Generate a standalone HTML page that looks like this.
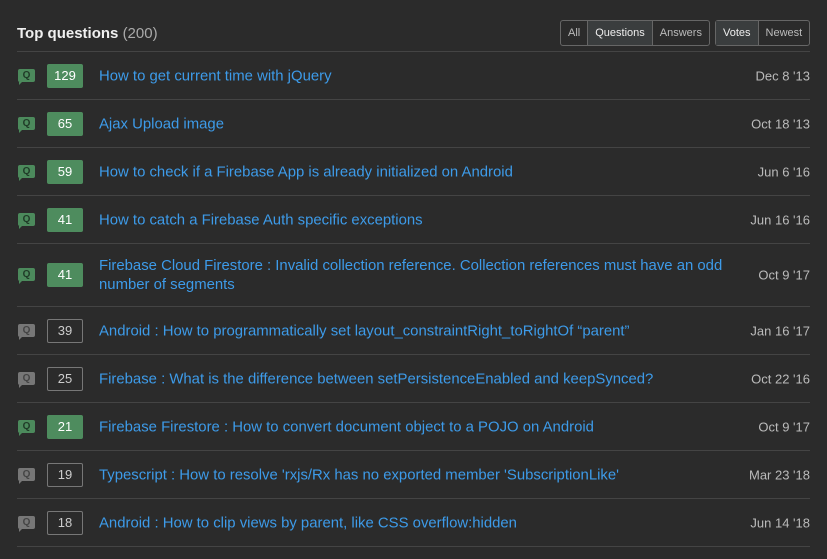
<!DOCTYPE html>
<html><head><style>
body{margin:0;background:#2b2b2b;font-family:"Liberation Sans",Arial,sans-serif;width:827px;height:559px;overflow:hidden;position:relative}
.h{position:absolute;left:17px;top:25px;font-size:15px;color:#f0f0f0;font-weight:bold}
.h span{font-weight:normal;color:#aaa}
.g{position:absolute;top:20px;height:24px;border:1px solid #666;border-radius:3px;display:flex;font-size:11px;color:#bbb}
.g div{padding:0 7px;line-height:24px;border-left:1px solid #666}
.g div:first-child{border-left:none}
.g .s{background:#3a3d3e;color:#eee}
.list{position:absolute;left:17px;top:51px;width:793px}
.r{border-top:1px solid #444;height:47px;position:relative}
.r.t{height:62px}
.ic{position:absolute;left:1px;top:50%;margin-top:-7px;width:17px;height:13px;border-radius:2px;background:#4c8a5c;font-size:10px;font-weight:bold;color:#1f3a27;text-align:center;line-height:13px}
.ic:after{content:"";position:absolute;left:1px;bottom:-3px;border-left:3px solid #4c8a5c;border-bottom:3px solid transparent}
.ic.gr{background:#777;color:#444}
.ic.gr:after{border-left-color:#777}
.b{position:absolute;left:30px;top:50%;margin-top:-12px;width:36px;height:24px;line-height:24px;text-align:center;font-size:13px;color:#fff;background:#4e8c5e;border-radius:2px;box-sizing:border-box}
.b.o{background:none;border:1px solid #777;color:#ccc;line-height:22px}
.q{position:absolute;left:82px;top:50%;transform:translateY(-50%);margin-top:1px;font-size:14.9px;color:#3d9be9;width:640px;line-height:19px}
.d{position:absolute;right:0;top:50%;transform:translateY(-50%);font-size:13px;color:#bbb}
</style></head><body>
<div class="h">Top questions <span>(200)</span></div>
<div class="g" style="left:560px"><div>All</div><div class="s">Questions</div><div>Answers</div></div>
<div class="g" style="left:715px"><div class="s">Votes</div><div>Newest</div></div>
<div class="list">
<div class="r"><div class="ic">Q</div><div class="b">129</div><div class="q">How to get current time with jQuery</div><div class="d">Dec 8 '13</div></div>
<div class="r"><div class="ic">Q</div><div class="b">65</div><div class="q">Ajax Upload image</div><div class="d">Oct 18 '13</div></div>
<div class="r"><div class="ic">Q</div><div class="b">59</div><div class="q">How to check if a Firebase App is already initialized on Android</div><div class="d">Jun 6 '16</div></div>
<div class="r"><div class="ic">Q</div><div class="b">41</div><div class="q">How to catch a Firebase Auth specific exceptions</div><div class="d">Jun 16 '16</div></div>
<div class="r t"><div class="ic">Q</div><div class="b">41</div><div class="q">Firebase Cloud Firestore : Invalid collection reference. Collection references must have an odd number of segments</div><div class="d">Oct 9 '17</div></div>
<div class="r"><div class="ic gr">Q</div><div class="b o">39</div><div class="q">Android : How to programmatically set layout_constraintRight_toRightOf “parent”</div><div class="d">Jan 16 '17</div></div>
<div class="r"><div class="ic gr">Q</div><div class="b o">25</div><div class="q">Firebase : What is the difference between setPersistenceEnabled and keepSynced?</div><div class="d">Oct 22 '16</div></div>
<div class="r"><div class="ic">Q</div><div class="b">21</div><div class="q">Firebase Firestore : How to convert document object to a POJO on Android</div><div class="d">Oct 9 '17</div></div>
<div class="r"><div class="ic gr">Q</div><div class="b o">19</div><div class="q">Typescript : How to resolve 'rxjs/Rx has no exported member 'SubscriptionLike'</div><div class="d">Mar 23 '18</div></div>
<div class="r"><div class="ic gr">Q</div><div class="b o">18</div><div class="q">Android : How to clip views by parent, like CSS overflow:hidden</div><div class="d">Jun 14 '18</div></div>
<div class="r" style="height:12px"></div>
</div>
</body></html>
